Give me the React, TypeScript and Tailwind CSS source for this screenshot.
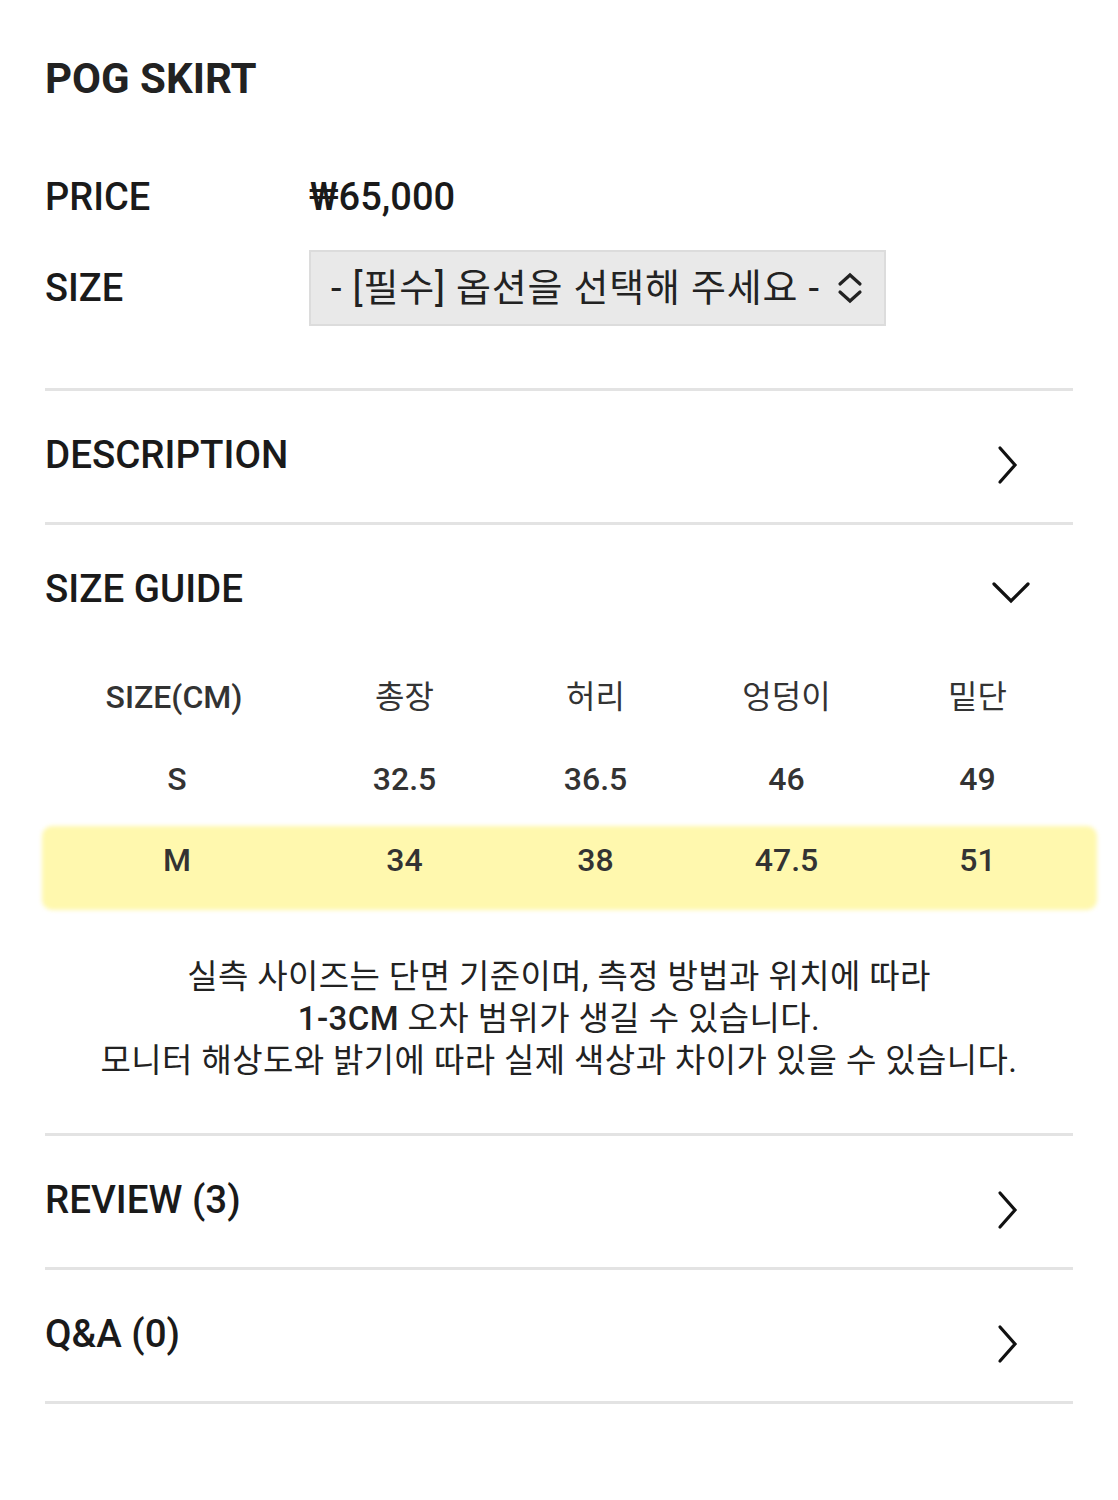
import React from 'react';

const font = { fontFamily: 'Roboto, "Noto Sans CJK KR", sans-serif' };

function ChevronRight() {
  return (
    <svg width="22" height="40" viewBox="0 0 22 40" fill="none" className="mt-4 mr-[54px]">
      <path d="M3 3 L18 20 L3 37" stroke="#111" strokeWidth="3.2" strokeLinecap="round" strokeLinejoin="miter" />
    </svg>
  );
}

function ChevronDown() {
  return (
    <svg width="40" height="26" viewBox="0 0 40 26" fill="none" className="mt-1 mr-[42px]">
      <path d="M3 4 L20 21 L37 4" stroke="#111" strokeWidth="3.2" strokeLinecap="round" />
    </svg>
  );
}

function Divider() {
  return <div className="h-[3px] bg-[#e3e3e3]" />;
}

function AccordionRow({ title, open }: { title: string; open?: boolean }) {
  return (
    <div className="flex h-[131px] items-center justify-between">
      <span className="text-[38.5px] font-medium text-[#1a1a1a] leading-none -mt-[3px]">{title}</span>
      {open ? <ChevronDown /> : <ChevronRight />}
    </div>
  );
}

const rows = [
  ['S', '32.5', '36.5', '46', '49'],
  ['M', '34', '38', '47.5', '51'],
];

export default function App() {
  return (
    <div className="bg-white min-h-[1500px] px-[45px] text-[#1a1a1a]" style={font}>
      <h1 className="pt-[55px] text-[42px] font-bold leading-[48px] text-[#222]">POG SKIRT</h1>

      <div className="mt-[56px] flex h-[76px] items-center">
        <span className="w-[264px] text-[38px] font-medium leading-none">PRICE</span>
        <span className="text-[38px] font-medium leading-none">₩65,000</span>
      </div>

      <div className="mt-[15px] flex h-[76px] items-center">
        <span className="w-[264px] text-[38px] font-medium leading-none">SIZE</span>
        <div className="flex h-[76px] w-[577px] items-center justify-between border-2 border-[#dcdcdc] bg-[#e9e9e9] pl-[20px] pr-[20px]">
          <span className="text-[38px] tracking-[0.8px] leading-none text-[#222]">- [필수] 옵션을 선택해 주세요 -</span>
          <svg width="28" height="32" viewBox="0 0 28 32" fill="none">
            <path d="M4 12 L14 3 L24 12" stroke="#222" strokeWidth="3.2" strokeLinecap="round" />
            <path d="M4 20 L14 29 L24 20" stroke="#222" strokeWidth="3.2" strokeLinecap="round" />
          </svg>
        </div>
      </div>

      <div className="mt-[62px]">
        <Divider />
        <AccordionRow title="DESCRIPTION" />
        <Divider />
        <AccordionRow title="SIZE GUIDE" open />

        <div className="text-[32px] text-[#333]">
          <div className="grid h-[82px] grid-cols-[264px_191px_191px_191px_191px] items-center text-center leading-none">
            <span className="font-medium -ml-[6px]">SIZE(CM)</span>
            <span>총장</span>
            <span>허리</span>
            <span>엉덩이</span>
            <span>밑단</span>
          </div>
          {rows.map((r, i) => (
            <div key={r[0]} className="relative grid h-[81px] grid-cols-[264px_191px_191px_191px_191px] items-center text-center font-medium leading-none">
              {i === 1 && (
                <div className="absolute left-[-3px] right-[-24px] top-[7px] h-[84px] rounded-[10px] bg-[#fff8ae] blur-[2px]" />
              )}
              {r.map((c, j) => (
                <span key={j} className="relative">{c}</span>
              ))}
            </div>
          ))}
        </div>

        <p className="mt-[56px] text-center text-[33px] tracking-[0.4px] leading-[42px] text-[#222]">
          실측 사이즈는 단면 기준이며, 측정 방법과 위치에 따라
          <br />
          <span className="font-medium">1-3CM</span> 오차 범위가 생길 수 있습니다.
          <br />
          모니터 해상도와 밝기에 따라 실제 색상과 차이가 있을 수 있습니다.
        </p>

        <div className="mt-[51px]">
          <Divider />
          <AccordionRow title="REVIEW (3)" />
          <Divider />
          <AccordionRow title="Q&A (0)" />
          <Divider />
        </div>
      </div>
    </div>
  );
}
